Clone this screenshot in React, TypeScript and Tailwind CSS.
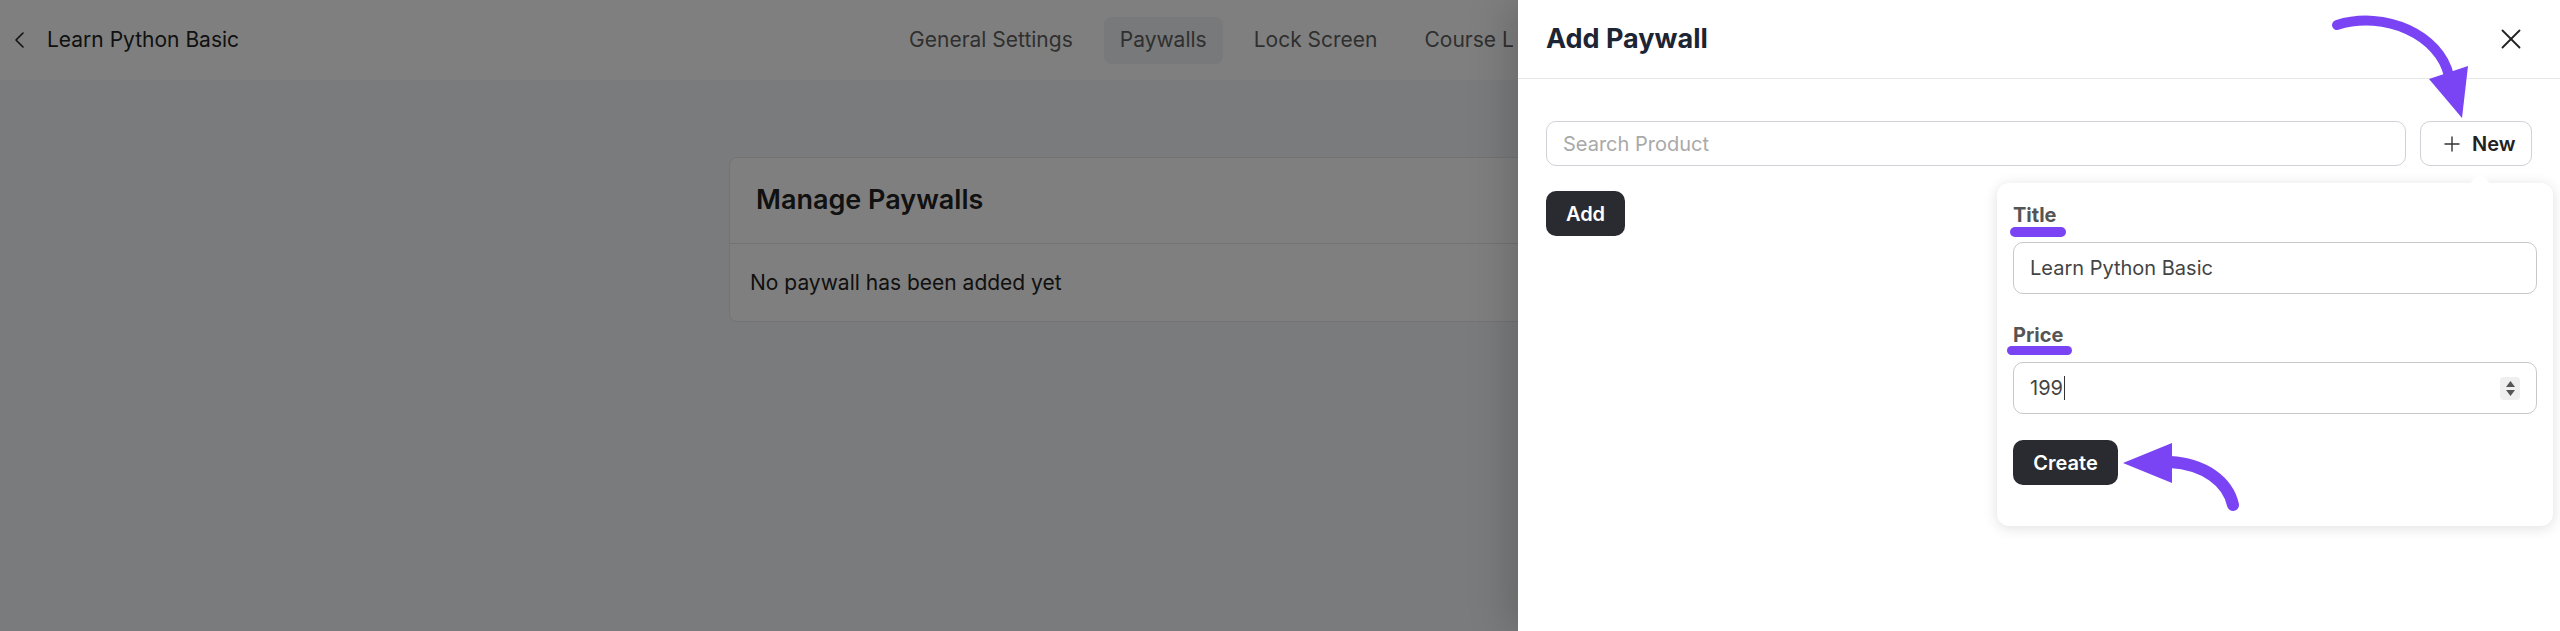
import { X } from "lucide-react";

// the rest of the tab list sits under the drawer; only "Course L" shows past its edge
const tabs = ["General Settings", "Paywalls", "Lock Screen", "Course L"];

function Arrows() {
  return (
    <svg className="pointer-events-none absolute left-0 top-0" width="2560" height="631" viewBox="0 0 2560 631" fill="none">
      {/* arrow pointing at the New button */}
      <path d="M2337 25 C2385 10 2440 35 2449 76" stroke="#7a44f5" strokeWidth="10" strokeLinecap="round" />
      <polygon points="2429,79 2468,66 2462,118" fill="#7a44f5" />
      {/* arrow pointing at the Create button */}
      <path d="M2170 462 C2205 464 2228 482 2233 505" stroke="#7a44f5" strokeWidth="12" strokeLinecap="round" />
      <polygon points="2123,463 2172,443 2172,483" fill="#7a44f5" />
    </svg>
  );
}

function NewPaywallPopover() {
  return (
    <div className="absolute left-[479px] top-[104px] w-[556px] rounded-xl bg-white px-4 pb-[41px] pt-[18px] shadow-[0_2px_14px_rgba(0,0,0,0.13)]">
      <span className="absolute -top-[7px] left-[476px] h-[14px] w-[14px] rotate-45 bg-white" />
      <div className="relative w-fit">
        <label className="text-[20px] font-bold leading-7 text-[#555]">Title</label>
        <span className="absolute -left-[3px] top-[26px] h-[10px] w-[56px] rounded-full bg-[#7a44f5]" />
      </div>
      <div className="mt-[13px] flex h-[52px] items-center rounded-[10px] border border-[#c9c9c9] pl-4 text-[20px] text-[#444]">
        Learn Python Basic
      </div>
      <div className="relative mt-[27px] w-fit">
        <label className="text-[20px] font-bold leading-7 text-[#555]">Price</label>
        <span className="absolute -left-[6px] top-[25px] h-[9px] w-[65px] rounded-full bg-[#7a44f5]" />
      </div>
      <div className="mt-[13px] flex h-[52px] items-center rounded-[10px] border border-[#c9c9c9] pl-4 pr-4 text-[20px] text-[#444]">
        <span>199</span>
        <span className="ml-px h-[24px] w-px bg-[#333]" />
        <span className="ml-auto flex h-[23px] w-[20px] flex-col items-center justify-center gap-[3px] rounded-sm bg-[#efefef]">
          <svg width="9" height="6" viewBox="0 0 9 6"><path d="M4.5 0 9 6H0z" fill="#555" /></svg>
          <svg width="9" height="6" viewBox="0 0 9 6"><path d="M0 0h9L4.5 6z" fill="#555" /></svg>
        </span>
      </div>
      <button className="mt-[26px] h-[45px] w-[105px] rounded-[10px] bg-[#2a2b30] text-[20px] font-semibold text-white">
        Create
      </button>
    </div>
  );
}

export default function App() {
  return (
    <div className="relative h-[631px] w-[2560px] overflow-hidden bg-[#f4f6f8] font-['Inter',sans-serif]">
      <header className="flex h-20 items-center bg-white">
        <button className="ml-[14px] flex items-center gap-[22px] text-[21px] text-[#222]">
          <svg width="11" height="16" viewBox="0 0 11 16" fill="none">
            <path d="M9 1 2 8l7 7" stroke="#222" strokeWidth="1.6" strokeLinecap="round" strokeLinejoin="round" />
          </svg>
          Learn Python Basic
        </button>
        <nav className="ml-[654px] flex w-[624px] gap-[15px] overflow-hidden">
          {tabs.map((t) => (
            <span
              key={t}
              className={
                t === "Paywalls"
                  ? "flex h-[47px] shrink-0 items-center whitespace-nowrap rounded-lg bg-[#f1f2f4] px-4 text-[21px] text-[#5f5f5f]"
                  : "flex h-[47px] shrink-0 items-center whitespace-nowrap px-4 text-[21px] text-[#5f5f5f]"
              }
            >
              {t}
            </span>
          ))}
        </nav>
      </header>

      <main className="pt-[77px]">
        <section className="mx-auto w-[1102px] rounded-lg border border-[#e6e7ea] bg-white">
          <div className="flex h-[86px] items-center border-b border-[#e6e7ea] px-[26px]">
            <h2 className="text-[27px] font-semibold text-[#222]">Manage Paywalls</h2>
          </div>
          <div className="flex h-[77px] items-center px-5 text-[21px] text-[#222]">No paywall has been added yet</div>
        </section>
      </main>

      <div className="absolute inset-0 bg-black/50" />

      <aside className="absolute right-0 top-0 flex h-full w-[1042px] flex-col bg-white shadow-[-8px_0_40px_rgba(0,0,0,0.18)]">
        <div className="flex h-[79px] shrink-0 items-center justify-between border-b border-[#e5e7eb] pl-7 pr-[32px]">
          <h1 className="text-[27px] font-bold text-[#1d2433]">Add Paywall</h1>
          <X size={34} strokeWidth={1.3} className="text-[#222]" />
        </div>
        <div className="relative px-7 pt-[42px]">
          <div className="flex gap-[14px]">
            <input
              placeholder="Search Product"
              className="h-[45px] flex-1 rounded-[10px] border border-[#cfd2d6] px-4 text-[20px] placeholder:text-[#a9a9a9]"
            />
            <button className="flex h-[45px] w-[112px] items-center gap-3 rounded-[10px] border border-[#cfd2d6] pl-[23px] text-[20px] font-semibold text-[#222]">
              <svg width="16" height="16" viewBox="0 0 16 16" fill="none">
                <path d="M8 1v14M1 8h14" stroke="#333" strokeWidth="1.4" strokeLinecap="round" />
              </svg>
              New
            </button>
          </div>
          <button className="mt-[25px] h-[45px] w-[79px] rounded-[10px] bg-[#2a2b30] text-[20px] font-semibold text-white">
            Add
          </button>
          <NewPaywallPopover />
        </div>
      </aside>

      <Arrows />
    </div>
  );
}
